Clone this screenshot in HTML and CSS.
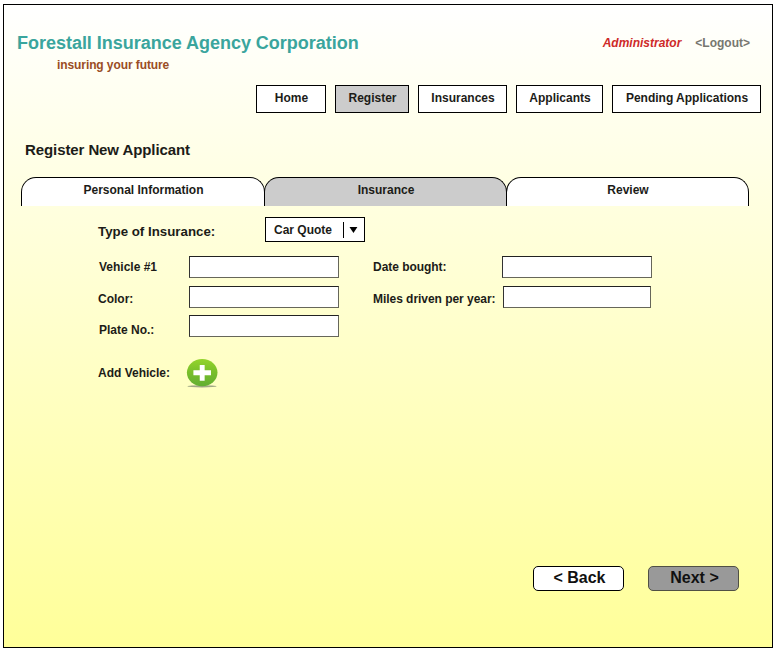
FILE: index.html
```html
<!DOCTYPE html>
<html lang="en">
<head>
<meta charset="utf-8">
<title>Forestall Insurance Agency Corporation</title>
<link rel="stylesheet" href="styles.css">
</head>
<body>
<div class="page">
  <header class="header">
    <div class="brand">
      <h1 class="brand-name">Forestall Insurance Agency Corporation</h1>
      <p class="tagline">insuring your future</p>
    </div>
    <div class="account">
      <span class="role">Administrator</span>
      <a class="logout">&lt;Logout&gt;</a>
    </div>
  </header>
  <nav class="nav">
    <a class="nav-item home">Home</a>
    <a class="nav-item register active">Register</a>
    <a class="nav-item insurances">Insurances</a>
    <a class="nav-item applicants">Applicants</a>
    <a class="nav-item pending">Pending Applications</a>
  </nav>
  <main>
    <h2 class="heading">Register New Applicant</h2>
    <div class="tabs">
      <div class="tab personal">Personal Information</div>
      <div class="tab insurance active">Insurance</div>
      <div class="tab review">Review</div>
    </div>
    <div class="type-row">
      <span class="type-label">Type of Insurance:</span>
      <div class="select">
        <span class="select-value">Car Quote</span>
        <svg class="select-arrow" width="9" height="6" viewBox="0 0 9 6"><path d="M0.5 0H8.5L4.5 6Z"/></svg>
      </div>
    </div>
    <div class="fields">
      <label class="label nudge" for="vehicle">Vehicle #1</label>
      <input class="field" id="vehicle" type="text">
      <label class="label date" for="date">Date bought:</label>
      <input class="field" id="date" type="text">
      <label class="label lower" for="color">Color:</label>
      <input class="field" id="color" type="text">
      <label class="label lower miles" for="miles">Miles driven per year:</label>
      <input class="field narrow" id="miles" type="text">
      <label class="label lowest nudge" for="plate">Plate No.:</label>
      <input class="field" id="plate" type="text">
    </div>
    <div class="add-row">
      <span class="add-label">Add Vehicle:</span>
      <svg class="add-icon" width="34" height="32" viewBox="0 0 34 32">
        <defs>
          <linearGradient id="green" x1="0" y1="0" x2="0" y2="1">
            <stop offset="0" stop-color="#94d42c"/>
            <stop offset="0.5" stop-color="#78be2b"/>
            <stop offset="1" stop-color="#62ae31"/>
          </linearGradient>
        </defs>
        <ellipse cx="17" cy="28.3" rx="14.5" ry="1.1" fill="#8f987a" opacity=".85"/>
        <ellipse cx="17.2" cy="14.6" rx="15.3" ry="13.7" fill="url(#green)"/>
        <path d="M17.2 7V22.8M8.4 14.8H26" fill="none" stroke="#fff" stroke-width="4.9"/>
      </svg>
    </div>
    <div class="actions">
      <button class="button back">&lt; Back</button>
      <button class="button next">Next &gt;</button>
    </div>
  </main>
</div>
</body>
</html>
```

FILE: styles.css
```css
* { box-sizing: border-box; }

body {
  margin: 0;
  background: #fff;
  color: #1c1c18;
  font: bold 12px/14px "Liberation Sans", Arial, sans-serif;
}

h1, h2, p { margin: 0; }

.page {
  width: 770px;
  height: 644px;
  margin: 4px 0 0 3px;
  border: 1px solid #000;
  background: linear-gradient(#fff, #ff9);
}

.header {
  display: flex;
  justify-content: space-between;
  height: 80px;
  padding: 28px 22px 0 13px;
}

.brand-name {
  color: #3aa59d;
  font-size: 18px;
  line-height: 20px;
  letter-spacing: -0.02px;
}

.tagline {
  margin: 5px 0 0 40px;
  color: #9a4d24;
  letter-spacing: -0.09px;
}

.account {
  display: flex;
  gap: 14px;
  padding-top: 3px;
}

.role { color: #ce2a29; font-style: italic; }
.logout { color: #777770; }

.nav {
  display: flex;
  justify-content: flex-end;
  gap: 9px;
  padding-right: 11px;
}

.nav-item {
  height: 28px;
  padding: 5px 0 0 1px;
  border: 1px solid #000;
  background: #fff;
  text-align: center;
}

.nav-item.active, .tab.active { background: #ccc; }

.home { width: 70px; }
.register { width: 74px; }
.insurances { width: 89px; }
.applicants { width: 87px; }
.pending { width: 149px; }

.heading {
  margin: 28px 0 0 21px;
  font-size: 15px;
  line-height: 17px;
  letter-spacing: -0.09px;
}

.tabs {
  display: flex;
  margin: 19px 0 0 17px;
}

.tab {
  width: 243px;
  height: 29px;
  padding: 5px 0 0 1px;
  border: 1px solid #000;
  border-bottom: 0;
  border-radius: 15px 15px 0 0;
  background: #fff;
  text-align: center;
}

.tab + .tab { margin-left: -1px; }
.tab.personal { width: 244px; }

.type-row {
  display: flex;
  margin: 11px 0 0 94px;
}

.type-label {
  width: 167px;
  padding-top: 7px;
  font-size: 13.3px;
  line-height: 15px;
}

.select {
  display: flex;
  width: 100px;
  height: 25px;
  padding: 4px 6px 3px 8px;
  border: 1px solid #000;
  background: #fff;
}

.select-value {
  width: 71px;
  padding-top: 1px;
  border-right: 1px solid #000;
}

.select-arrow { margin: 5px 0 0 5px; }

.fields {
  display: grid;
  grid-template-columns: 91px 150px 34px 129px 150px;
  grid-template-rows: 30px 29px 22px;
  margin: 14px 0 0 94px;
}

.label { padding-top: 4px; white-space: nowrap; }
.label.lower { padding-top: 6px; }
.label.lowest { padding-top: 8px; }
.label.nudge { padding-left: 1px; }
.label.date, .label.miles { grid-column: 4; letter-spacing: -0.04px; }

.field {
  width: 150px;
  height: 22px;
  margin: 0;
  padding: 0 4px;
  border: 1px solid #66665a;
  border-top-color: #222;
  border-left-color: #333;
  border-radius: 0;
  background: #fff;
  font: inherit;
}

.field.narrow { width: 148px; margin-left: 1px; }

.add-row {
  display: flex;
  margin: 21px 0 0 94px;
}

.add-label { width: 87px; padding-top: 8px; }

.actions {
  display: flex;
  justify-content: flex-end;
  gap: 24px;
  margin-top: 176px;
  padding-right: 33px;
}

.button {
  width: 91px;
  height: 25px;
  margin: 0;
  padding: 0 0 1px 2px;
  border: 1px solid #000;
  border-radius: 5px;
  background: #fff;
  color: #111;
  font: bold 16px/18px "Liberation Sans", Arial, sans-serif;
}

.button.next { border-color: #505044; background: #999; }
```
